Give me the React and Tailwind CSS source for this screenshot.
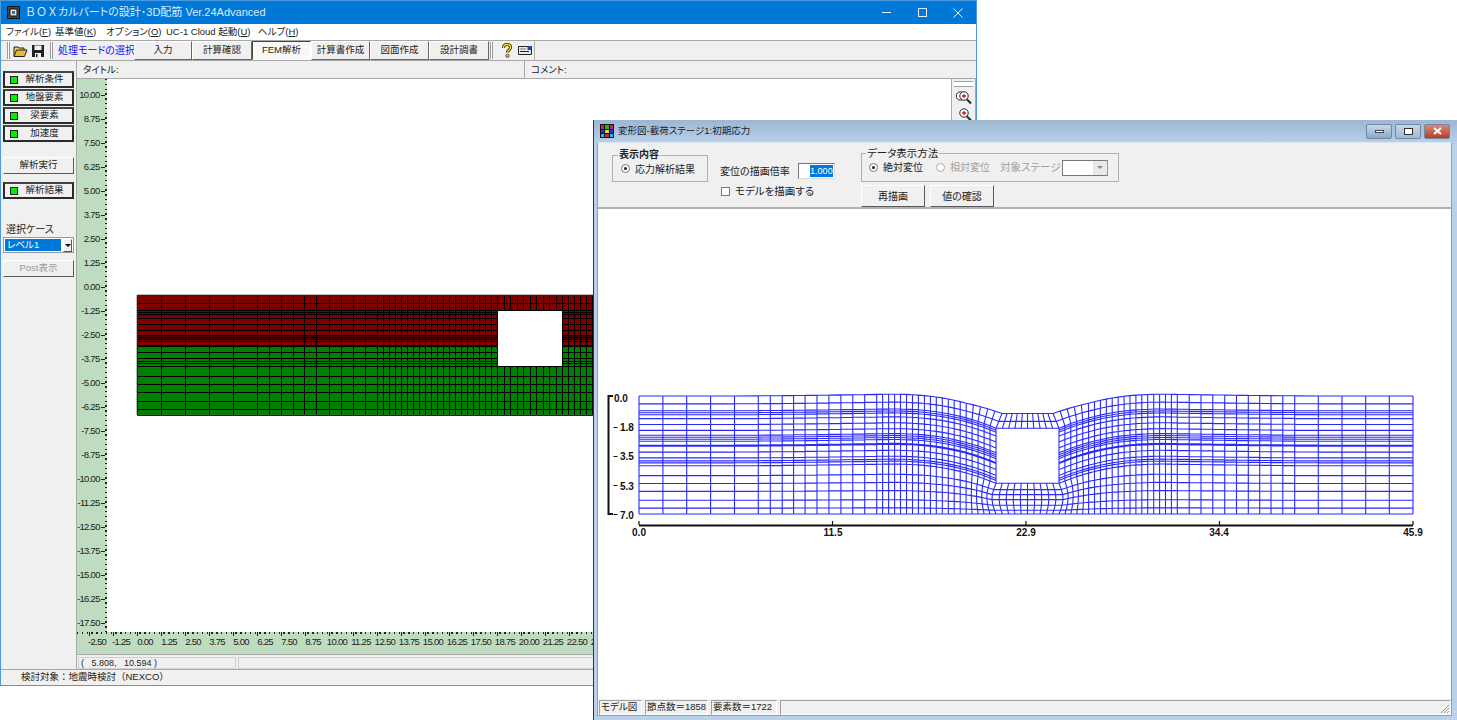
const L = [0,24,48,72,96,120,132,144,155.5,167,179,191,203,215,227,239];
for (let i = 1; i <= 20; i++) L.push(239 + 6 * i);
const R = [0,8,15,17,19,23,29,35,40,42,44,46,50,51,57,63,66,68,71,81,89,97,106,114,120];

function smooth(t) {
  if (t <= 0) return 0;
  if (t >= 1) return 1;
  return t * t * (3 - 2 * t);
}

function meshPaths(xs, holeA, holeB, rowFn, deform) {
  let h = "";
  let v = "";
  const inHole = (x, r) => x > holeA && x < holeB && r > 15 && r < 71;
  const pt = (x, r) => {
    const p = deform ? deform(x, r) : [x, rowFn(r)];
    return p[0].toFixed(1) + " " + p[1].toFixed(1);
  };
  R.forEach((r) => {
    for (let i = 0; i < xs.length - 1; i++) {
      const mid = (xs[i] + xs[i + 1]) / 2;
      if (inHole(mid, r)) continue;
      h += "M" + pt(xs[i], r) + "L" + pt(xs[i + 1], r);
    }
  });
  xs.forEach((x) => {
    for (let j = 0; j < R.length - 1; j++) {
      const mid = (R[j] + R[j + 1]) / 2;
      if (inHole(x, mid)) continue;
      v += "M" + pt(x, R[j]) + "L" + pt(x, R[j + 1]);
    }
  });
  return h + v;
}

const defXs = [];
L.forEach((c) => defXs.push(638 + (c * 357) / 359));
for (let k = 1; k < 10; k++) defXs.push(995 + k * 6.3);
[...L].reverse().forEach((c) => defXs.push(1058 + ((359 - c) * 354) / 359));

function deformPoint(x, r) {
  const d = Math.max(995 - x, x - 1058, 0);
  const t = Math.max(0, 1 - d / 110);
  const b = 1.15 * Math.pow(t, 2.3) - 0.15 * smooth(1 - d / 280);
  const g = r <= 71 ? 1 : (120 - r) / 49;
  const y = 396 + (r * 118) / 120 + 17.5 * b * g;
  const side = Math.max(-1, Math.min(1, (1026.5 - x) / 31.5));
  let dx = 0;
  if (r < 15 && d < 30) {
    dx = side * 6 * ((15 - r) / 15) * (1 - d / 30);
  }
  if (r > 71 && d < 30) {
    dx = -side * 4 * Math.sin((Math.PI * (r - 71)) / 49) * (1 - d / 30);
  }
  return [x + dx, y];
}

const blueMesh = meshPaths(defXs, 995, 1058, null, deformPoint);

const flatXs = [];
L.forEach((c) => flatXs.push(Math.round(137 + (c * 360) / 359) + 0.5));
for (let k = 1; k < 10; k++) flatXs.push(Math.round(497 + k * 6.5) + 0.5);
[...L].reverse().forEach((c) => flatXs.push(Math.round(562 + ((359 - c) * 360) / 359) + 0.5));
const flatMesh = meshPaths(flatXs, 497.5, 562.5, (r) => 295.5 + r, null);

const yLabels = [];
for (let i = 0; i < 23; i++) yLabels.push((10 - i * 1.25).toFixed(2));
const xLabels = [];
for (let i = 0; i < 36; i++) xLabels.push((-2.5 + i * 1.25).toFixed(2));

const raised = "border border-t-white border-l-white border-r-[#5a5a5a] border-b-[#5a5a5a]";

function Grip() {
  return <div className="mx-[1px] h-[17px] w-[3px] shrink-0 border-x border-[#9a9a9a] bg-white" />;
}

function Folder() {
  return (
    <svg width="15" height="14" viewBox="0 0 15 14">
      <path d="M1 12V3h4l1 1h5v2" fill="#f4d35e" stroke="#222" strokeWidth="1" />
      <path d="M1 12.5l2.5-6.5H14l-2.5 6.5z" fill="#e8b93a" stroke="#222" strokeWidth="1" />
    </svg>
  );
}

function Save() {
  return (
    <svg width="14" height="14" viewBox="0 0 14 14">
      <path d="M1 1h12v12H1z" fill="#222" />
      <path d="M3.5 1.5h7v4.5h-7z" fill="#f2f2f2" />
      <path d="M4 9h6v4H4z" fill="#f2f2f2" />
      <path d="M5 10h1.5v3H5z" fill="#222" />
    </svg>
  );
}

function Help() {
  return (
    <svg width="12" height="15" viewBox="0 0 12 15">
      <path d="M2.5 5C2.5 2.5 4 1.5 6 1.5s3.5 1.2 3.5 3c0 2.4-3 2.6-3 5" fill="none" stroke="#222" strokeWidth="3" />
      <path d="M2.5 5C2.5 2.5 4 1.5 6 1.5s3.5 1.2 3.5 3c0 2.4-3 2.6-3 5" fill="none" stroke="#f7e400" strokeWidth="1.4" />
      <circle cx="6.5" cy="12.8" r="1.6" fill="#f7e400" stroke="#222" strokeWidth="0.8" />
    </svg>
  );
}

function Card() {
  return (
    <svg width="14" height="11" viewBox="0 0 14 11">
      <path d="M.5 1.5h13v8H.5z" fill="#e8eef4" stroke="#222" />
      <path d="M9.5 1h4v4h-4z" fill="#1f45b5" />
      <path d="M2 6.5h9" stroke="#222" />
      <path d="M2 4h6" stroke="#777" />
    </svg>
  );
}

function Lens({ double }) {
  return (
    <svg width="17" height="15" viewBox="0 0 17 15">
      {double && <circle cx="5.5" cy="6" r="4.2" fill="#fff" stroke="#222" />}
      <circle cx="9" cy="6" r="4.2" fill="#fff" stroke="#222" />
      <path d="M7 6h4M9 4v4" stroke="#e01010" strokeWidth="1.3" />
      <path d="M12 9.5l4 4" stroke="#222" strokeWidth="2" />
    </svg>
  );
}

function ToolButton({ children, active, className = "" }) {
  return (
    <div
      className={
        "flex h-[19px] items-center justify-center text-[9.5px] " +
        (active
          ? "border border-t-[#444] border-l-[#444] border-r-white border-b-white bg-[#f8f8f8] "
          : "border border-t-white border-l-white border-r-[#666] border-b-[#666] bg-[#f0f0f0] ") +
        className
      }
    >
      {children}
    </div>
  );
}

function Led({ label }) {
  return (
    <div className="flex h-[17px] w-[71px] items-center border-2 border-[#2b2b2b] border-t-[#444] bg-[#f0f0f0] pl-[5px] text-[9.5px]">
      <span className="h-[8px] w-[8px] border border-[#222] bg-[#00f000]" />
      <span className="flex-1 pr-[1px] text-center">{label}</span>
    </div>
  );
}

function Radio({ disabled }) {
  return (
    <span className={"flex h-[9px] w-[9px] items-center justify-center rounded-full border bg-white " + (disabled ? "border-[#aaa]" : "border-[#777]")}>
      {!disabled && <span className="h-[3px] w-[3px] rounded-full bg-[#222]" />}
    </span>
  );
}

function MainWindow() {
  return (
    <div className="absolute left-0 top-0 flex h-[686px] w-[977px] flex-col overflow-hidden border border-[#4a9be0] bg-[#f0f0f0] text-[#222]">
      <div className="flex h-[23px] shrink-0 items-center bg-[#0078d7] pl-[6px] text-[#dcebf8]">
        <svg width="13" height="13" viewBox="0 0 13 13">
          <path d="M.5.5h12v12H.5z" fill="#444" stroke="#111" />
          <path d="M3 3h7v7H3z" fill="#dfe7ee" stroke="#111" />
          <path d="M5 5h3v3H5z" fill="#3c6f9c" />
        </svg>
        <span className="ml-[5px] text-[11px]">
          <span className="[font-feature-settings:normal]">ＢＯＸ</span>カルバートの設計･3D配筋 Ver.24Advanced
        </span>
        <div className="ml-auto flex items-center text-[#e6f1fb]">
          <span className="flex w-[36px] justify-center">
            <span className="h-px w-[9px] bg-[#e6f1fb]" />
          </span>
          <span className="flex w-[36px] justify-center">
            <span className="h-[9px] w-[9px] border border-[#e6f1fb]" />
          </span>
          <span className="flex w-[36px] justify-center">
            <svg width="10" height="10" viewBox="0 0 10 10">
              <path d="M.5.5l9 9M9.5.5l-9 9" stroke="#e6f1fb" />
            </svg>
          </span>
        </div>
      </div>
      <div className="flex h-[16px] shrink-0 items-center whitespace-nowrap bg-white pl-[5px] text-[9.5px]">
        <span className="w-[49px]">ファイル(<u>F</u>)</span>
        <span className="w-[51px]">基準値(<u>K</u>)</span>
        <span className="w-[60px]">オプション(<u>O</u>)</span>
        <span className="w-[92px]">UC-1 Cloud 起動(<u>U</u>)</span>
        <span>ヘルプ(<u>H</u>)</span>
      </div>
      <div className="flex h-[21px] shrink-0 items-center whitespace-nowrap border-y border-[#a8a8a8] pl-[5px]">
        <Grip />
        <div className="ml-[2px] flex w-[36px] items-center gap-[3px]">
          <Folder />
          <Save />
        </div>
        <Grip />
        <span className="ml-[4px] w-[76px] text-[10px] text-[#1010f0]">処理モードの選択</span>
        <ToolButton className="w-[58px]">入力</ToolButton>
        <ToolButton className="w-[60px]">計算確認</ToolButton>
        <ToolButton className="w-[59px]" active>FEM解析</ToolButton>
        <ToolButton className="w-[59px]">計算書作成</ToolButton>
        <ToolButton className="w-[59px]">図面作成</ToolButton>
        <ToolButton className="w-[60px]">設計調書</ToolButton>
        <Grip />
        <div className="ml-[7px] flex items-center gap-[5px]">
          <Help />
          <Card />
        </div>
        <div className="ml-[2px] h-[20px] border-r border-[#b0b0b0]" />
      </div>
      <div className="flex min-h-0 flex-1">
        <div className="flex w-[76px] shrink-0 flex-col items-start border-r border-[#a8a8a8] pl-[2px] pt-[10px] text-[9.5px]">
          <div className="flex flex-col gap-px">
            <Led label="解析条件" />
            <Led label="地盤要素" />
            <Led label="梁要素" />
            <Led label="加速度" />
          </div>
          <div className={"mt-[15px] flex h-[17px] w-[71px] items-center justify-center bg-[#f0f0f0] " + raised}>解析実行</div>
          <div className="mt-[8px]"><Led label="解析結果" /></div>
          <div className="mt-[24px] pl-[3px] text-[10px] leading-[14px]">選択ケース</div>
          <div className="flex h-[16px] w-[71px] items-center border border-[#999] bg-white p-px">
            <span className="flex h-full w-[56px] items-center bg-[#0078d7] pl-[2px] text-[9.5px] text-white">レベル1</span>
            <span className={"ml-[2px] flex h-[13px] flex-1 items-center justify-center bg-[#f0f0f0] " + raised}>
              <span className="h-0 w-0 border-x-[3px] border-t-[3px] border-x-transparent border-t-black" />
            </span>
          </div>
          <div className={"mt-[7px] flex h-[17px] w-[71px] items-center justify-center bg-[#f0f0f0] text-[#9a9a9a] " + raised}>Post表示</div>
        </div>
        <div className="flex min-w-0 flex-1 flex-col">
          <div className="flex h-[18px] shrink-0 items-center border-b border-[#a8a8a8] text-[9.5px]">
            <div className="h-full w-[448px] border-r border-[#a8a8a8] pl-[6px] leading-[17px]">タイトル:</div>
            <div className="pl-[6px] leading-[17px]">コメント:</div>
          </div>
          <div className="flex min-h-0 flex-1">
            <div className="relative w-[30px] shrink-0 overflow-hidden bg-[#c0dcc0] pt-[4px]">
              <div className="absolute right-0 top-0 h-full w-[2px] bg-[repeating-linear-gradient(to_bottom,#222_0,#222_1.5px,transparent_1.5px,transparent_4.8px)]" />
              {yLabels.map((v) => (
                <div key={v} className="flex h-[24px] items-center justify-end pr-[2px] text-[9.5px] tracking-[-0.7px]">
                  <span>{v}</span>
                  <span className="ml-[1.5px] h-px w-[4px] bg-[#222]" />
                </div>
              ))}
            </div>
            <div className="min-w-0 flex-1 overflow-hidden bg-white">
              <svg className="block" width="844" height="553" viewBox="107 79 844 553">
                <path d="M137 295h785v51H137z" fill="#800000" />
                <path d="M137 346h785v69H137z" fill="#008000" />
                <path d="M137 336h785v4H137z" fill="#4a0000" />
                <path d="M497 310h65v56h-65z" fill="#fff" />
                <path d={flatMesh} fill="none" stroke="#000" strokeWidth="1" />
                <path d="M137 295h785v120H137z" fill="none" stroke="#555" strokeWidth="0.8" />
              </svg>
            </div>
            <div className="flex w-[25px] shrink-0 flex-col items-center border-x border-[#a8a8a8] pt-[2px]">
              <div className="h-[6px] w-[19px] border-y border-[#a0a0a0] bg-white" />
              <div className="mt-[3px]"><Lens double /></div>
              <div className="mt-[2px]"><Lens /></div>
            </div>
          </div>
          <div className="flex h-[22px] shrink-0 flex-col overflow-hidden bg-[#c0dcc0] text-[9.5px] tracking-[-0.7px]">
            <div className="flex h-[4px] shrink-0 bg-[repeating-linear-gradient(to_right,#222_0,#222_1.5px,transparent_1.5px,transparent_4.8px)] bg-[length:100%_2px] bg-no-repeat pl-[12px]">
              {xLabels.map((v) => (
                <span key={v} className="h-full w-[24px] shrink-0 border-l border-[#222]" />
              ))}
            </div>
            <div className="flex pl-[8px] leading-[11px]">
              {xLabels.map((v) => (
                <span key={v} className="w-[24px] shrink-0 text-center">{v}</span>
              ))}
            </div>
          </div>
          <div className="flex h-[15px] shrink-0 items-center gap-[2px] border-t border-[#a8a8a8] pl-px pt-px text-[9px]">
            <div className="h-[12px] w-[158px] border border-[#d0d0d0] pl-[2px] leading-[11px]">(&nbsp;&nbsp;&nbsp;5.808,&nbsp;&nbsp;&nbsp;10.594 )</div>
            <div className="h-[12px] flex-1 border border-[#d0d0d0]" />
          </div>
        </div>
      </div>
      <div className="flex h-[16px] shrink-0 items-center border-t border-[#a8a8a8] pl-[20px] text-[9.5px] [font-feature-settings:normal]">検討対象：地震時検討（NEXCO）</div>
    </div>
  );
}

function WinBtn({ children, className }) {
  return (
    <div className={"flex h-[15px] w-[26px] items-center justify-center rounded-[2px] border border-[#7088a4] " + className}>
      {children}
    </div>
  );
}

function StatusCell({ children, className }) {
  return (
    <div className={"flex h-[15px] items-center whitespace-nowrap border border-t-[#a0a0a0] border-l-[#a0a0a0] border-r-white border-b-white pl-px text-[9.5px] " + className}>
      {children}
    </div>
  );
}

function ChartLabel({ x, y, children, anchor = "middle" }) {
  return (
    <text x={x} y={y} textAnchor={anchor} fontFamily="'Liberation Sans', sans-serif" fontWeight="700" fontSize="10" fill="#111">
      {children}
    </text>
  );
}

function DeformWindow() {
  return (
    <div className="absolute left-[593px] top-[120px] flex h-[600px] w-[864px] flex-col border-l border-[#333] bg-[#b9d1ea] text-[#222]">
      <div className="flex h-[22px] shrink-0 items-center bg-[linear-gradient(to_bottom,#9db6d2,#b7cfe9)] pl-[6px] pr-[7px]">
        <svg width="14" height="14" viewBox="0 0 14 14">
          <path d="M0 0h14v14H0z" fill="#111" />
          <path d="M1 1h3v4H1z" fill="#e01070" />
          <path d="M5 1h4v4H5z" fill="#10c020" />
          <path d="M10 1h3v4h-3z" fill="#e01070" />
          <path d="M1 6h3v3H1z" fill="#1040e0" />
          <path d="M5 6h4v3H5z" fill="#e0e020" />
          <path d="M10 6h3v3h-3z" fill="#1040e0" />
          <path d="M1 10h3v3H1z" fill="#10d0c0" />
          <path d="M5 10h4v3H5z" fill="#e01070" />
          <path d="M10 10h3v3h-3z" fill="#10d0c0" />
        </svg>
        <span className="ml-[4px] text-[9.5px]">変形図-載荷ステージ1:初期応力</span>
        <div className="ml-auto flex gap-[3px]">
          <WinBtn className="bg-[linear-gradient(to_bottom,#c7d8ea,#8ea9c6)]">
            <span className="h-[3px] w-[9px] border border-[#445] bg-white" />
          </WinBtn>
          <WinBtn className="bg-[linear-gradient(to_bottom,#c7d8ea,#a2bad4)]">
            <span className="h-[7px] w-[9px] border border-[#333] bg-white" />
          </WinBtn>
          <WinBtn className="border-[#7a4a48] bg-[linear-gradient(to_bottom,#d88a78,#b83c28)]">
            <svg width="9" height="8" viewBox="0 0 9 8">
              <path d="M1 1l7 6M8 1l-7 6" stroke="#fff" strokeWidth="2" />
            </svg>
          </WinBtn>
        </div>
      </div>
      <div className="mx-[3px] mb-[4px] mr-[5px] flex min-h-0 flex-1 flex-col border border-[#8aa0b8] border-t-[#dfe8f2] bg-white">
        <div className="flex h-[66px] shrink-0 border-b-2 border-[#b0b0b0] bg-[#f0f0f0] pl-[14px] text-[10px]">
          <div className="relative mt-[12px] flex h-[27px] w-[96px] items-center border border-[#b0b0b0] pl-[8px]">
            <span className="absolute -top-[6px] left-[5px] bg-[#f0f0f0] px-px text-[10px] font-bold leading-[10px]">表示内容</span>
            <Radio />
            <span className="ml-[5px] mt-[1px]">応力解析結果</span>
          </div>
          <div className="ml-[12px] flex w-[141px] flex-col">
            <div className="mt-[20px] flex items-center">
              <span className="text-[10px]">変位の描画倍率</span>
              <span className="ml-[8px] flex h-[16px] w-[37px] items-center justify-end border border-t-[#777] border-l-[#777] border-r-[#ddd] border-b-[#ddd] bg-white pr-[1px] text-[9px]">
                <span className="bg-[#0078d7] leading-[12px] text-white">1.000</span>
              </span>
            </div>
            <div className="mt-[5px] flex items-center pl-[1px]">
              <span className="h-[9px] w-[9px] border border-[#777] bg-white" />
              <span className="ml-[5px] text-[10.5px]">モデルを描画する</span>
            </div>
          </div>
          <div className="flex flex-col">
            <div className="relative mt-[10px] flex h-[29px] w-[258px] items-center border border-[#b0b0b0] pl-[7px]">
              <span className="absolute -top-[6px] left-[4px] bg-[#f0f0f0] px-px text-[10.5px] leading-[10px]">データ表示方法</span>
              <Radio />
              <span className="ml-[5px] w-[53px]">絶対変位</span>
              <Radio disabled />
              <span className="ml-[5px] w-[50px] text-[#a0a0a0]">相対変位</span>
              <span className="w-[62px] text-[10.5px] text-[#a0a0a0]">対象ステージ</span>
              <span className="flex h-[16px] w-[46px] items-center justify-end border border-t-[#777] border-l-[#777] border-r-[#999] border-b-[#777] bg-white">
                <span className="flex h-[14px] w-[14px] items-center justify-center bg-[#e8e8e8]">
                  <span className="h-0 w-0 border-x-[3px] border-t-[3px] border-x-transparent border-t-[#888]" />
                </span>
              </span>
            </div>
            <div className="mt-[3px] flex gap-[5px]">
              <div className={"flex h-[22px] w-[64px] items-center justify-center bg-[#f0f0f0] text-[10px] " + raised}>再描画</div>
              <div className={"flex h-[22px] w-[64px] items-center justify-center bg-[#f0f0f0] text-[10px] " + raised}>値の確認</div>
            </div>
          </div>
        </div>
        <div className="min-h-0 flex-1 bg-white">
          <svg className="block" width="855" height="492" viewBox="597 209 855 492">
            <path d={blueMesh} fill="none" stroke="#2a2aff" strokeWidth="1.1" />
            <path d="M612 396h-4.5v118h4.5" fill="none" stroke="#111" strokeWidth="2" />
            <path d="M612.5 427.5h4M612.5 456.5h4M612.5 485.5h4M612.5 514.5h4" stroke="#111" strokeWidth="1.2" />
            <ChartLabel x="613" y="402" anchor="start">0.0</ChartLabel>
            <ChartLabel x="619" y="431" anchor="start">1.8</ChartLabel>
            <ChartLabel x="619" y="460" anchor="start">3.5</ChartLabel>
            <ChartLabel x="619" y="490" anchor="start">5.3</ChartLabel>
            <ChartLabel x="619" y="519" anchor="start">7.0</ChartLabel>
            <path d="M638 525.5h774" stroke="#111" strokeWidth="2" />
            <path d="M638 521v4M831.5 521v4M1025 521v4M1218.5 521v4M1412 521v4" stroke="#111" strokeWidth="1.2" />
            <ChartLabel x="638" y="536">0.0</ChartLabel>
            <ChartLabel x="832" y="536">11.5</ChartLabel>
            <ChartLabel x="1025" y="536">22.9</ChartLabel>
            <ChartLabel x="1218" y="536">34.4</ChartLabel>
            <ChartLabel x="1412" y="536">45.9</ChartLabel>
          </svg>
        </div>
        <div className="relative flex h-[16px] shrink-0 items-center gap-[3px] bg-[#f0f0f0] pl-px">
          <StatusCell className="w-[43px]">モデル図</StatusCell>
          <StatusCell className="w-[63px]">節点数＝1858</StatusCell>
          <StatusCell className="w-[66px]">要素数＝1722</StatusCell>
          <StatusCell className="flex-1" />
          <svg className="absolute bottom-[1px] right-px" width="11" height="11" viewBox="0 0 11 11">
            <path d="M10 2L2 10M10 5l-5 5M10 8l-2 2" stroke="#999" fill="none" />
          </svg>
        </div>
      </div>
    </div>
  );
}

export default function App() {
  return (
    <div className="relative h-[720px] w-[1457px] overflow-hidden bg-white font-['Liberation_Sans','Noto_Sans_CJK_JP',sans-serif] [font-feature-settings:'palt']">
      <MainWindow />
      <DeformWindow />
    </div>
  );
}
